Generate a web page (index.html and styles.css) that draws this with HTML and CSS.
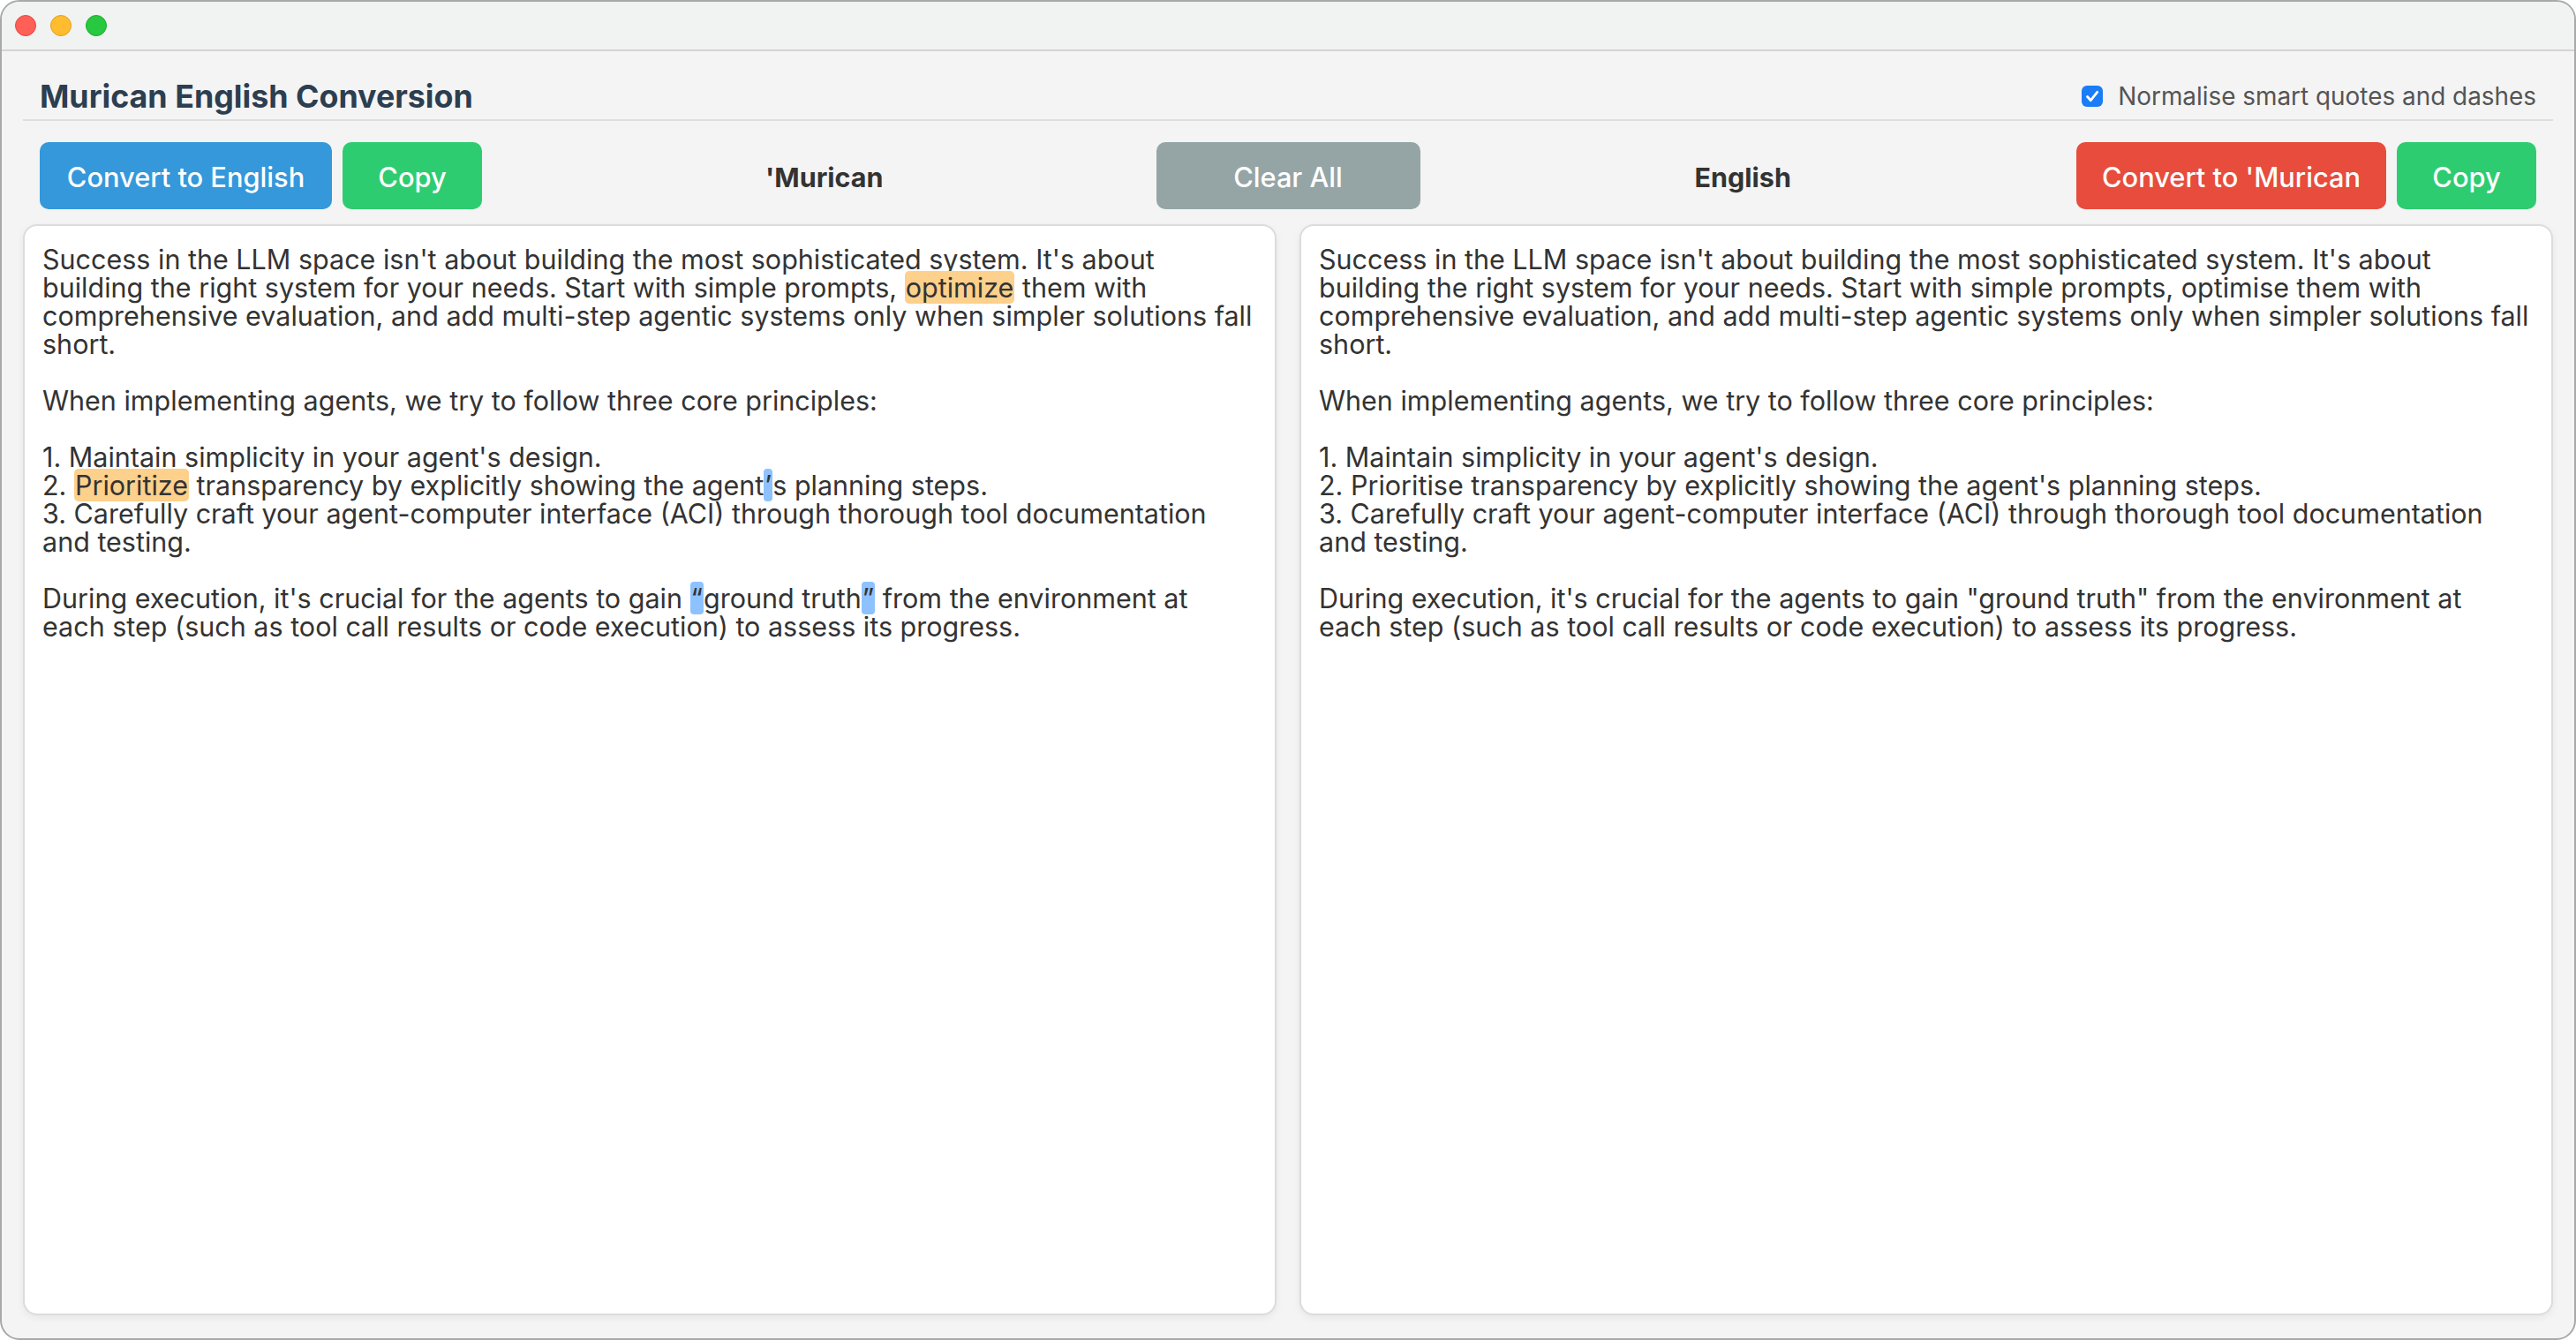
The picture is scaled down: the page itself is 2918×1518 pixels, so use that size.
FILE: index.html
```html
<!DOCTYPE html>
<html>
<head>
<meta charset="utf-8">
<title>Murican English Conversion</title>
<link rel="stylesheet" href="styles.css">
</head>
<body>
<div class="window">
  <div class="titlebar">
    <span class="light red"></span>
    <span class="light yellow"></span>
    <span class="light green"></span>
  </div>
  <div class="content">
    <header class="header">
      <h1 class="title">Murican English Conversion</h1>
      <label class="option">
        <span class="checkbox"><svg viewBox="0 0 24 24" width="24" height="24"><path d="M6.5 12.5l3.8 4.2 7.4-9.4" fill="none" stroke="#fff" stroke-width="2.8" stroke-linecap="round" stroke-linejoin="round"/></svg></span>
        <span class="option-text">Normalise smart quotes and dashes</span>
      </label>
    </header>
    <div class="toolbar">
      <div class="side">
        <button class="btn btn-blue w-convert-en">Convert to English</button>
        <button class="btn btn-green w-copy">Copy</button>
        <div class="pane-label">'Murican</div>
      </div>
      <button class="btn btn-grey w-clear">Clear All</button>
      <div class="side">
        <div class="pane-label">English</div>
        <button class="btn btn-red w-convert-mu">Convert to 'Murican</button>
        <button class="btn btn-green w-copy">Copy</button>
      </div>
    </div>
    <div class="panes">
      <div class="pane"><div class="text">Success in the LLM space isn't about building the most sophisticated system. It's about
building the right system for your needs. Start with simple prompts, <span class="hl-word">optimize</span> them with
comprehensive evaluation, and add multi-step agentic systems only when simpler solutions fall
short.

When implementing agents, we try to follow three core principles:

1. Maintain simplicity in your agent's design.
2. <span class="hl-word">Prioritize</span> transparency by explicitly showing the agent<span class="hl-quote">’</span>s planning steps.
3. Carefully craft your agent-computer interface (ACI) through thorough tool documentation
and testing.

During execution, it's crucial for the agents to gain <span class="hl-quote">“</span>ground truth<span class="hl-quote">”</span> from the environment at
each step (such as tool call results or code execution) to assess its progress.</div></div>
      <div class="pane"><div class="text">Success in the LLM space isn't about building the most sophisticated system. It's about
building the right system for your needs. Start with simple prompts, optimise them with
comprehensive evaluation, and add multi-step agentic systems only when simpler solutions fall
short.

When implementing agents, we try to follow three core principles:

1. Maintain simplicity in your agent's design.
2. Prioritise transparency by explicitly showing the agent's planning steps.
3. Carefully craft your agent-computer interface (ACI) through thorough tool documentation
and testing.

During execution, it's crucial for the agents to gain "ground truth" from the environment at
each step (such as tool call results or code execution) to assess its progress.</div></div>
    </div>
  </div>
</div>
</body>
</html>
```

FILE: styles.css
```css
* { box-sizing: border-box; }
html, body { margin: 0; padding: 0; }
body {
  width: 2918px;
  height: 1518px;
  background: #ffffff;
  font-family: "Inter", "Liberation Sans", sans-serif;
  overflow: hidden;
}
.window {
  width: 2918px;
  height: 1518px;
  border: 2px solid #a9a9a9;
  border-radius: 22px;
  overflow: hidden;
  background: #f4f4f4;
  display: flex;
  flex-direction: column;
}
.titlebar {
  height: 56px;
  flex: none;
  background: #f1f2f2;
  border-bottom: 2px solid #d3d3d3;
  display: flex;
  align-items: center;
  gap: 16px;
  padding-left: 15px;
}
.light {
  width: 24px;
  height: 24px;
  border-radius: 50%;
  display: block;
}
.red { background: #fe5f57; border: 1px solid #e2463f; }
.yellow { background: #febc2e; border: 1px solid #e1a116; }
.green { background: #28c840; border: 1px solid #14ae2a; }
.content {
  flex: 1;
  display: flex;
  flex-direction: column;
  padding: 0 24px 26px;
}
.header {
  display: flex;
  align-items: center;
  justify-content: space-between;
  padding: 28px 19px 3px 19px;
  border-bottom: 2px solid #dedede;
}
.title {
  margin: 0;
  font-size: 35.8px;
  line-height: 46px;
  font-weight: 700;
  color: #2c3e50;
}
.option {
  display: flex;
  align-items: center;
  gap: 17px;
  color: #555555;
  font-size: 27.9px;
}
.checkbox {
  width: 24px;
  height: 24px;
  border-radius: 6px;
  background: #1a7df6;
  display: block;
}
.checkbox svg { display: block; }
.toolbar {
  display: grid;
  grid-template-columns: 1fr auto 1fr;
  align-items: center;
  padding: 0 19px;
  margin-top: 24px;
}
.side {
  display: flex;
  align-items: center;
  gap: 12px;
}
.pane-label {
  flex: 1;
  text-align: center;
  font-size: 30.5px;
  font-weight: 700;
  color: #333333;
  padding-top: 2px;
}
.btn {
  height: 76px;
  border: none;
  border-radius: 10px;
  color: #ffffff;
  font-family: inherit;
  font-size: 30.8px;
  font-weight: 500;
  padding: 2px 0 0;
  flex: none;
}
.btn-blue { background: #3498db; }
.btn-green { background: #2ecc71; }
.btn-grey { background: #95a5a6; }
.btn-red { background: #e74c3c; }
.w-convert-en { width: 331px; }
.w-copy { width: 158px; }
.w-clear { width: 299px; }
.w-convert-mu { width: 351px; }
.panes {
  flex: 1;
  display: grid;
  grid-template-columns: 1fr 1fr;
  gap: 26px;
  margin-top: 17px;
}
.pane {
  background: #ffffff;
  border: 2px solid #dcdcdc;
  border-radius: 16px;
  box-shadow: 0 3px 8px rgba(0, 0, 0, 0.06);
  padding: 22px 20px 20px;
}
.text {
  white-space: pre;
  font-size: 30.5px;
  line-height: 32px;
  color: #333333;
}
.hl-word {
  background: #fdd08b;
  border-radius: 5px;
  padding: 0 1px;
}
.hl-quote {
  background: #8ec2ff;
  border-radius: 4px;
  padding: 0 1px;
}
```
